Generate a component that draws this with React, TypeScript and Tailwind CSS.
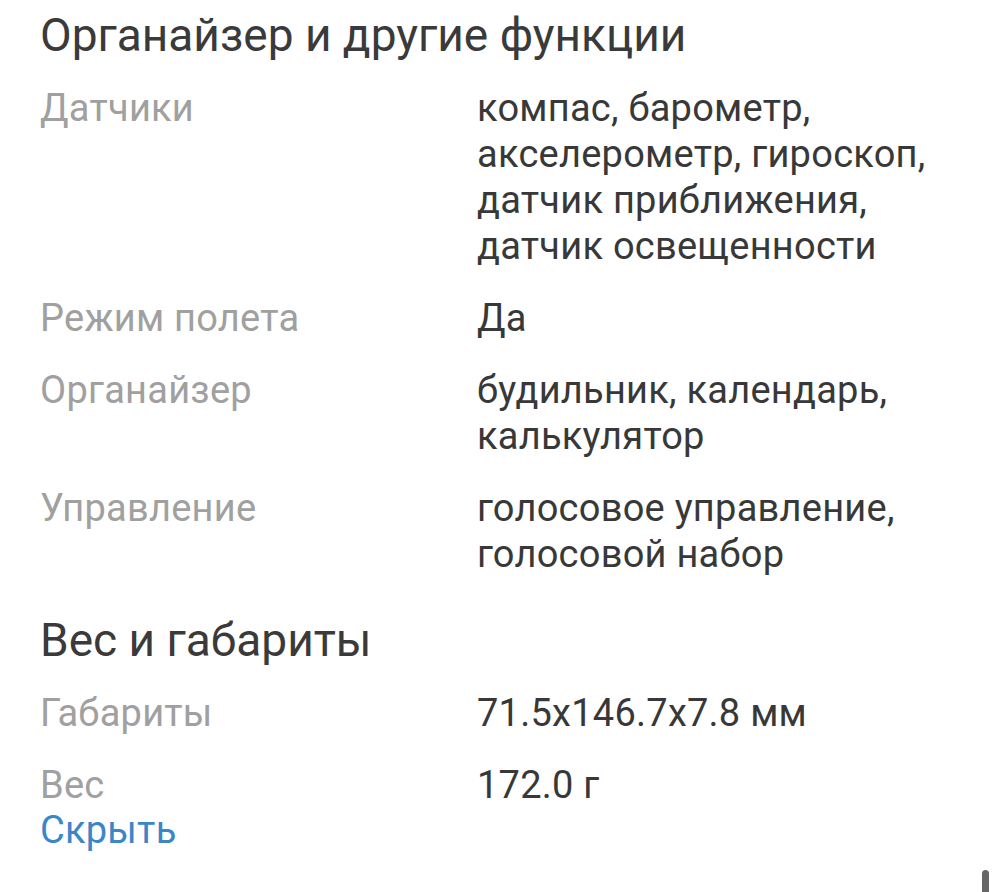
import React from "react";

const rows1: [string, string[]][] = [
  ["Датчики", ["компас, барометр,", "акселерометр, гироскоп,", "датчик приближения,", "датчик освещенности"]],
  ["Режим полета", ["Да"]],
  ["Органайзер", ["будильник, календарь,", "калькулятор"]],
  ["Управление", ["голосовое управление,", "голосовой набор"]],
];

const rows2: [string, string[]][] = [
  ["Габариты", ["71.5x146.7x7.8 мм"]],
  ["Вес", ["172.0 г"]],
];

function Row({ label, values }: { label: string; values: string[] }) {
  return (
    <div className="flex">
      <div className="w-[437px] shrink-0 text-[#a0a0a0]">{label}</div>
      <div className="text-[#383838]">
        {values.map((v) => (
          <div key={v}>{v}</div>
        ))}
      </div>
    </div>
  );
}

export default function App() {
  return (
    <div
      className="relative h-[892px] w-[999px] overflow-hidden bg-white pl-[40px] pt-[12px] text-[38px] leading-[46px] tracking-[0.25px]"
      style={{ fontFamily: "Roboto, 'Noto Sans', sans-serif" }}
    >
      <h2 className="text-[46px] leading-[46px] tracking-[0px] text-[#3a3a3a]">Органайзер и другие функции</h2>
      <div className="mt-[27px] flex flex-col gap-[26px]">
        {rows1.map(([l, v]) => (
          <Row key={l} label={l} values={v} />
        ))}
      </div>
      <h2 className="mt-[40px] text-[46px] leading-[46px] tracking-[0px] text-[#3a3a3a]">Вес и габариты</h2>
      <div className="mt-[27px] flex flex-col gap-[26px]">
        {rows2.map(([l, v]) => (
          <Row key={l} label={l} values={v} />
        ))}
      </div>
      <div className="-mt-[1px] text-[#3a86c8]">Скрыть</div>
      <div className="absolute bottom-0 right-[10px] h-[22px] w-[7px] rounded-t-full bg-[#666666]" />
    </div>
  );
}
